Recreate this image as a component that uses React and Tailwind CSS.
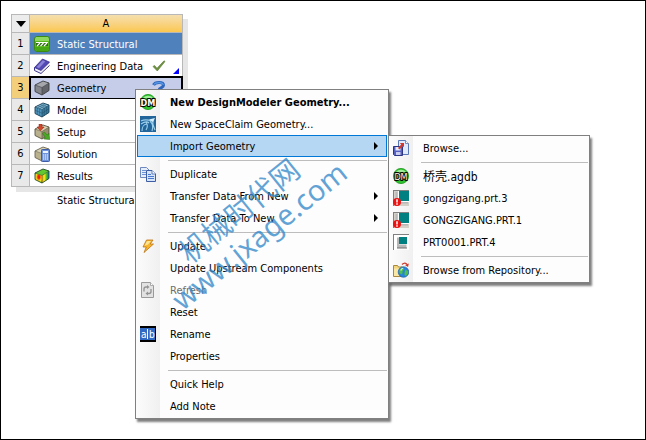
import React from "react";

const Icon = ({ children }) => (
  <svg viewBox="0 0 16 16" className="size-4 shrink-0" aria-hidden="true">
    {children}
  </svg>
);

const StructuralIcon = () => (
  <Icon>
    <rect x="0.5" y="0.5" width="15" height="15" rx="2.5" fill="#58b81c" stroke="#3b8a14" />
    <path d="M2 1h12l1 2v2H1V3z" fill="#8fd860" />
    <path d="M1 11h14v2l-2 2H3l-2-2z" fill="#46a814" />
    <path d="M2 6h12v4H2z" fill="#2f6f14" />
    <path d="M2 6.5h12M3 10l3-3M6.5 10l3-3M10 10l3-3" stroke="#fff" strokeWidth="1.1" fill="none" />
  </Icon>
);

const BookIcon = () => (
  <Icon>
    <path d="M1 10 7 13l8.5-7.5v1.5L7 15 1 12.5z" fill="#f1f1fa" />
    <path d="M0.500 9.5 8.5 1l7 3.200L7 12.500z" fill="#5349b4" stroke="#322b84" strokeWidth="0.8" strokeLinejoin="round" />
    <path d="M2.500 9 8.800 2.200l2.500 1.200L5 10.200z" fill="#8a83d6" />
    <path d="M0.500 9.500v3L7 15.500 15.500 7.500" stroke="#3a338c" fill="none" />
  </Icon>
);

const Box = ({ top, front, side, line }) => (
  <>
    <path d="M1 5 9 1l6 2-7 4.5z" fill={top} />
    <path d="M1 5l7 2.5V15l-7-3.500z" fill={front} />
    <path d="M8 7.5 15 3v7.5L8 15z" fill={side} />
    <path d="M1 5 9 1l6 2v7.5L8 15l-7-3.500z" fill="none" stroke={line} strokeWidth="0.9" strokeLinejoin="round" />
    <path d="M1 5l7 2.5V15M8 7.5 15 3" fill="none" stroke={line} strokeWidth="0.6" />
  </>
);

const GeometryIcon = () => (
  <Icon>
    <Box top="#a5a7ab" front="#84868b" side="#63656a" line="#3c3e42" />
  </Icon>
);

const ModelIcon = () => (
  <Icon>
    <Box top="#8cc3dd" front="#5598bf" side="#3b7c9d" line="#173f59" />
    <path
      d="M3.3 5.8V12.6M5.7 6.6V13.8M1 8.2l7 3.100 7-4.600M10.3 6V13.5M12.7 4.5V12M3.5 3.7l7 2.3M6 2.5l6.5 2M3.5 5.9 11 1.8M5.7 6.7 13 2.3"
      fill="none"
      stroke="#1d4c69"
      strokeWidth="0.5"
    />
  </Icon>
);

const SetupIcon = () => (
  <Icon>
    <Box top="#d9d2b4" front="#b9b08e" side="#968e6e" line="#5a5440" />
    <path d="M5 0h3v3h2.200L6.500 6.700 3 3h2z" fill="#d0472c" stroke="#8f220f" strokeWidth="0.5" />
    <path d="M8.500 9.500l1.800-1.500 3 3 1.700-1.500.8 6-6-.5 1.500-1.700z" fill="#4aa826" stroke="#256b0d" strokeWidth="0.5" />
  </Icon>
);

const SolutionIcon = () => (
  <Icon>
    <Box top="#d9d2b4" front="#b9b08e" side="#968e6e" line="#6a6450" />
    <rect x="7.5" y="3.5" width="8" height="12" rx="0.8" fill="#6f93da" stroke="#3d5ca5" />
    <rect x="9" y="5" width="5" height="2" fill="#eaf2ff" />
    <path d="M9 9h5M9 11h5M9 13h5" stroke="#fff" strokeWidth="1.2" strokeDasharray="1.2 0.7" />
  </Icon>
);

const ResultsIcon = () => (
  <Icon>
    <defs>
      <radialGradient id="resultFront" cx="0.55" cy="0.4" r="0.7">
        <stop offset="0.2" stopColor="#e8200c" />
        <stop offset="0.45" stopColor="#f9b414" />
        <stop offset="0.65" stopColor="#f3f01c" />
        <stop offset="1" stopColor="#2db72a" />
      </radialGradient>
      <linearGradient id="resultSide" x1="0" y1="0" x2="1" y2="0">
        <stop offset="0" stopColor="#f7a51c" />
        <stop offset="0.35" stopColor="#f0e71c" />
        <stop offset="0.7" stopColor="#35b92d" />
        <stop offset="1" stopColor="#1c68c8" />
      </linearGradient>
    </defs>
    <Box top="#62c832" front="url(#resultFront)" side="url(#resultSide)" line="#1f4a1d" />
  </Icon>
);

const DesignModelerIcon = () => (
  <Icon>
    <circle cx="8" cy="8" r="7.6" fill="#2fc42f" stroke="#1b961b" strokeWidth="0.8" />
    <path d="M3 4a6.5 6.5 0 0 1 10 0z" fill="#a2eb9c" />
    <text
      x="8"
      y="11.5"
      textAnchor="middle"
      className="font-['DejaVu_Sans_Condensed',sans-serif] text-[9px]"
      fill="#fff"
      stroke="#000"
      strokeWidth="1.8"
      paintOrder="stroke"
    >
      DM
    </text>
  </Icon>
);

const SpaceClaimIcon = () => (
  <Icon>
    <rect width="16" height="16" fill="#22659b" />
    <path
      d="M1 5c4-2 8-1 11 0M1 8c3-2 6-3 8-1M2 15c0-4 2-7 5-7M6 14c2-3 2-5 0-8M10 5c3 3 3 7 2 10M13 4c-1 4 1 7 2 10"
      stroke="#9bd0ec"
      strokeWidth="1.100"
      fill="none"
    />
    <path d="M9 3.5 15 2l-2 4z" fill="#d4eefa" />
  </Icon>
);

const CopyIcon = () => (
  <Icon>
    <path d="M0.5 1.5h6l2.500 2.500v7.500H0.5z" fill="#e6eefb" stroke="#6e89bf" />
    <path d="M2 4.5h4M2 6.5h5M2 8.5h4" stroke="#6e93d6" />
    <path d="M6.5 4.5h5.5L15.5 8v7.500h-9z" fill="#d6e4fa" stroke="#3d5da5" />
    <path d="M12 4.5V8h3.500" fill="#fff" stroke="#3d5da5" strokeWidth="0.8" />
    <path d="M8 8.5h3M8 10.5h6M8 12.5h6" stroke="#4b78cf" />
  </Icon>
);

const BoltIcon = () => (
  <Icon>
    <path
      d="M6.500 2H13l-2.800 4H13.500L4 14.500 6.300 9H3z"
      fill="#f6b52c"
      stroke="#bd7414"
      strokeWidth="0.8"
      strokeLinejoin="round"
    />
    <path d="M7 3h4L8 6.500 4.500 8z" fill="#fde596" />
  </Icon>
);

const RefreshIcon = () => (
  <Icon>
    <path d="M1.5 0.5h9l3 3v12h-12z" fill="#e2e2e2" stroke="#9a9a9a" />
    <path d="M10.5 0.5v3h3" fill="#fff" stroke="#9a9a9a" strokeWidth="0.8" />
    <path d="M4 9.500V7a2 2 0 0 1 2-2h1.500M11 7V9.500a2 2 0 0 1-2 2H7.500" fill="none" stroke="#929292" strokeWidth="1.300" />
    <path d="M7 3 9.500 5 7 7zM8 9.500 5.500 11.500l2.500 2z" fill="#929292" />
  </Icon>
);

const RenameIcon = () => (
  <Icon>
    <rect width="16" height="16" fill="#000" />
    <rect y="2" width="15" height="12" fill="#316ac5" />
    <text x="1" y="11.5" className="font-['DejaVu_Sans_Condensed',sans-serif] text-[10px]" fill="#fff">
      a
    </text>
    <text x="9" y="11.5" className="font-['DejaVu_Sans_Condensed',sans-serif] text-[10px]" fill="#fff">
      b
    </text>
    <path d="M7.5 3v10" stroke="#fff" />
  </Icon>
);

const BrowseIcon = () => (
  <Icon>
    <path d="M5.5 0.5h7l3 3v11h-10z" fill="#dfeafc" stroke="#5a78b4" />
    <path d="M12.5 0.5v3h3" fill="#fff" stroke="#5a78b4" strokeWidth="0.8" />
    <path d="M0.5 6.5h9v9h-8l-1-1z" fill="#5660c0" stroke="#2c3484" />
    <rect x="2.5" y="7" width="5" height="3.5" fill="#e8ebfb" />
    <rect x="3" y="12" width="4.5" height="3" fill="#c8cdf0" />
    <path d="M5 8 8.200 4.500 6.800 3H11v4.300L9.700 6 6.500 9.500z" fill="#d0382d" />
  </Icon>
);

const PartIcon = ({ alert }) => (
  <Icon>
    <path d="M0 0h16v16H0z" fill="#808080" />
    <path d="M1 1h15v15H1z" fill={alert ? "#d4d0c8" : "#fff"} />
    {alert ? (
      <>
        <path d="M6 1h10v10H6z" fill="#008080" />
        <path d="M3.5 2v10.500H15" fill="none" stroke="#b8b8b8" strokeWidth="2" />
        <path d="M5.5 1v10.500H16" fill="none" stroke="#fff" />
        <circle cx="4" cy="12" r="4" fill="#e11" />
        <path d="M4 9.300v3.200M4 13.300v1.400" stroke="#fff" strokeWidth="1.500" />
      </>
    ) : (
      <>
        <path d="M4 3.500h2v7h7.500v3.500H4z" fill="#b8b8b8" />
        <path d="M6 3h8v7H6z" fill="#008080" />
        <path d="M4 14h10" stroke="#707070" />
      </>
    )}
  </Icon>
);

const RepositoryIcon = () => (
  <Icon>
    <path d="M0.5 3.5h4l1 1.500h4v9.500h-9z" fill="#f1d47c" stroke="#a8883c" />
    <path d="M1 6.500h8v7.500H1z" fill="#fae7a6" />
    <circle cx="10.500" cy="10" r="5.300" fill="#2784d8" stroke="#1557a0" strokeWidth="0.6" />
    <path
      d="M7 7c2-2 4-1.500 4 0s-2 1.500-1.500 3-1 3-2 2S5.500 9 7 7zM12.500 8c2 0 3 1 2.500 3s-2 3-3 2.500 0-2-.5-3z"
      fill="#4fc04a"
    />
    <path d="M8 8.500a2 2 0 0 1 2-2" stroke="#d9f1ff" strokeWidth="1.200" fill="none" />
    <path d="M9 2.500C11 0.500 13 0.800 14 2.500" stroke="#cf3626" strokeWidth="1.200" fill="none" />
    <path d="M12 3l3.800-1.500L15 5z" fill="#cf3626" />
  </Icon>
);

const CheckMark = () => (
  <svg viewBox="0 0 14 12" className="h-3 w-3.5" role="img" aria-label="Up to date">
    <path d="M1 6.500 2.500 5.500 5 8.300 12 0.800 13 1.500 5.300 11z" fill="#6f9440" stroke="#567530" strokeWidth="0.6" />
  </svg>
);

const QuestionMark = () => (
  <svg viewBox="0 0 14 14" className="size-3.5" role="img" aria-label="Attention required">
    <path d="M1.500 4C3 0.800 11.500 0.500 11.500 4.300c0 2.500-4.500 2-4.500 5" fill="none" stroke="#2d66bd" strokeWidth="3" />
    <path d="M1.800 3.500C3.500 0.800 11 0.800 11.200 4" fill="none" stroke="#5c9be8" strokeWidth="1.200" />
    <circle cx="7" cy="12" r="1.500" fill="#2d66bd" />
  </svg>
);

const systemRows = [
  { name: "Static Structural", icon: StructuralIcon, title: true },
  { name: "Engineering Data", icon: BookIcon, status: CheckMark, shared: true },
  { name: "Geometry", icon: GeometryIcon, status: QuestionMark, selected: true },
  { name: "Model", icon: ModelIcon },
  { name: "Setup", icon: SetupIcon },
  { name: "Solution", icon: SolutionIcon },
  { name: "Results", icon: ResultsIcon },
];

const importItems = [
  { label: "Browse...", icon: <BrowseIcon /> },
  null,
  { label: "桥壳.agdb", icon: <DesignModelerIcon />, cjk: true },
  { label: "gongzigang.prt.3", icon: <PartIcon alert /> },
  { label: "GONGZIGANG.PRT.1", icon: <PartIcon alert /> },
  { label: "PRT0001.PRT.4", icon: <PartIcon /> },
  null,
  { label: "Browse from Repository...", icon: <RepositoryIcon /> },
];

// null entries are separators
const menuItems = [
  { label: "New DesignModeler Geometry...", icon: <DesignModelerIcon />, bold: true },
  { label: "New SpaceClaim Geometry...", icon: <SpaceClaimIcon /> },
  { label: "Import Geometry", arrow: true, children: importItems },
  null,
  { label: "Duplicate", icon: <CopyIcon /> },
  { label: "Transfer Data From New", arrow: true },
  { label: "Transfer Data To New", arrow: true },
  null,
  { label: "Update", icon: <BoltIcon /> },
  { label: "Update Upstream Components" },
  { label: "Refresh", icon: <RefreshIcon />, disabled: true },
  { label: "Reset" },
  { label: "Rename", icon: <RenameIcon /> },
  { label: "Properties" },
  null,
  { label: "Quick Help" },
  { label: "Add Note" },
];

function MenuItem({ item }) {
  const open = Boolean(item.children);
  return (
    <li role="none" className="relative">
      <button
        type="button"
        role="menuitem"
        disabled={item.disabled}
        aria-haspopup={item.arrow ? "menu" : undefined}
        aria-expanded={item.arrow ? open : undefined}
        className={`flex h-[22px] w-full items-center gap-3.5 border pr-2 pl-0.5 text-left whitespace-nowrap disabled:text-[#6d6d6d] ${
          open ? "border-[#0078d7] bg-[#b5d7f3]" : "border-transparent"
        } ${item.bold ? "font-bold" : ""} ${item.cjk ? "text-xs" : ""}`}
      >
        <span className="size-4 shrink-0">{item.icon}</span>
        <span className="flex-1 pt-0.5">{item.label}</span>
        {item.arrow && (
          <svg viewBox="0 0 4 8" className="h-2 w-1" aria-hidden="true">
            <path d="M0 0l4 4-4 4z" />
          </svg>
        )}
      </button>
      {open && (
        <Menu items={item.children} label={item.label} className="top-0 left-full ml-px w-[202px]" />
      )}
    </li>
  );
}

function Menu({ items, label, className }) {
  return (
    <ul
      role="menu"
      aria-label={label}
      className={`absolute border border-[#808080] bg-[linear-gradient(to_right,#fcfcfc,#f0f0f0_24px,#fdfdfd_24px)] p-px shadow-[2px_3px_2px_rgba(0,0,0,0.5)] ${className}`}
    >
      {items.map((item, i) =>
        item ? (
          <MenuItem key={item.label} item={item} />
        ) : (
          <li key={i} role="separator" className="flex h-1.5 items-center pl-[31px]">
            <span className="h-px flex-1 bg-[#bdbdbd]" />
          </li>
        )
      )}
    </ul>
  );
}

function SystemTable() {
  return (
    <table className="w-[172px] border-separate border-spacing-0 border-t border-r border-l border-[#b8b8b8] shadow-[5px_5px_0_#e6e6e6]">
      <thead>
        <tr className="h-[18px]">
          <th className="w-[18px] border-r border-b border-[#b8b8b8] bg-[#ececec] p-0">
            <svg viewBox="0 0 10 6" className="mx-auto h-1.5 w-2.5" role="img" aria-label="System options">
              <path d="M0 0h10L5 6z" />
            </svg>
          </th>
          <th className="border-b border-[#b8b8b8] bg-linear-to-b from-[#f5dfae] to-[#fcc74c] p-0 leading-4 font-normal">
            A
          </th>
        </tr>
      </thead>
      <tbody>
        {systemRows.map((row, i) => {
          const RowIcon = row.icon;
          const Status = row.status;
          return (
            <tr key={row.name} className="h-[22px]">
              <th
                scope="row"
                className={`border-r border-b border-[#b8b8b8] p-0 font-normal ${
                  row.selected ? "bg-[#f3cf7c]" : "bg-[#e9e9e9]"
                }`}
              >
                {i + 1}
              </th>
              <td
                className={`relative border-b border-[#b8b8b8] p-0 ${
                  row.title
                    ? "bg-[#4f81bd] text-white"
                    : row.selected
                      ? "bg-[#c5cde8] outline-2 -outline-offset-1 outline-black"
                      : "bg-white"
                }`}
              >
                <div className="flex items-center pr-4 pl-1">
                  <RowIcon />
                  <span className="flex-1 pt-0.5 pl-[7px] whitespace-nowrap">{row.name}</span>
                  {Status && <Status />}
                </div>
                {row.shared && (
                  <svg viewBox="0 0 6 6" className="absolute right-[3px] bottom-0.5 size-1.5" aria-hidden="true">
                    <path d="M6 0v6H0z" fill="#00f" />
                  </svg>
                )}
              </td>
            </tr>
          );
        })}
      </tbody>
    </table>
  );
}

export default function App() {
  return (
    <main className="relative min-h-screen overflow-hidden border border-black bg-white pt-[13px] pl-2.5 font-['DejaVu_Sans_Condensed','Noto_Sans_CJK_SC',sans-serif] text-[11px] leading-4 text-black">
      <SystemTable />
      <p className="mt-1.5 pl-[46px]">Static Structural</p>

      <Menu items={menuItems} label="Geometry" className="top-[88px] left-[134px] w-[254px]" />

      <div className="pointer-events-none absolute top-[190px] left-[137px] w-[222px] -rotate-39 text-center font-['Noto_Sans','Noto_Sans_CJK_SC',sans-serif] text-[29px] leading-8 text-[#2f86c9]/75">
        <div>机械时代网</div>
        <div>www.jxage.com</div>
      </div>
    </main>
  );
}
